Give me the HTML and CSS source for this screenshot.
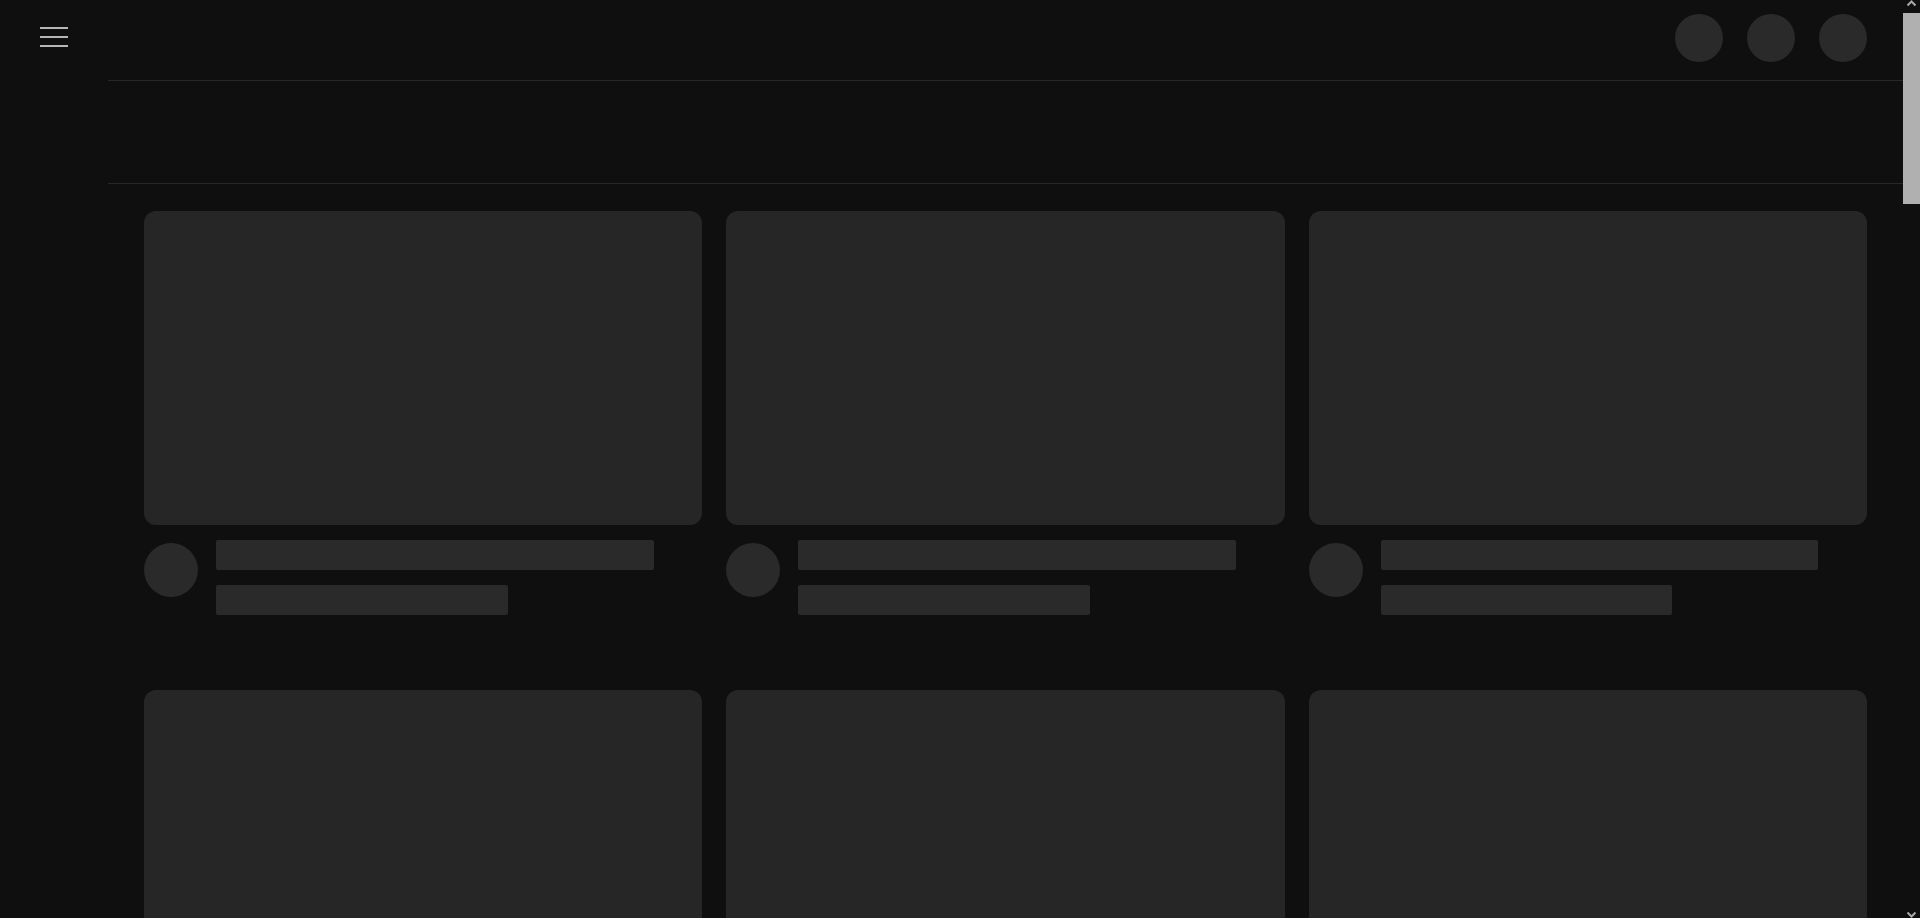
FILE: index.html
```html
<!DOCTYPE html>
<html lang="en">
<head>
<meta charset="utf-8">
<title>Loading</title>
<link rel="stylesheet" href="styles.css">
</head>
<body>
<div class="page">
  <aside class="guide">
    <button class="menu" aria-label="Menu">
      <svg width="28" height="20" viewBox="0 0 28 20">
        <line x1="0" y1="1" x2="28" y2="1" stroke="#fff" stroke-width="1.4"/>
        <line x1="0" y1="10" x2="28" y2="10" stroke="#fff" stroke-width="1.4"/>
        <line x1="0" y1="19" x2="28" y2="19" stroke="#fff" stroke-width="1.4"/>
      </svg>
    </button>
  </aside>
  <main class="main">
    <header class="masthead">
      <span class="dot"></span>
      <span class="dot"></span>
      <span class="dot"></span>
    </header>
    <div class="chips"></div>
    <section class="grid">
      <div class="card"><div class="thumb"></div><div class="meta"><span class="avatar"></span><div class="lines"><span class="bar bar-title"></span><span class="bar bar-sub"></span></div></div></div>
      <div class="card"><div class="thumb"></div><div class="meta"><span class="avatar"></span><div class="lines"><span class="bar bar-title"></span><span class="bar bar-sub"></span></div></div></div>
      <div class="card"><div class="thumb"></div><div class="meta"><span class="avatar"></span><div class="lines"><span class="bar bar-title"></span><span class="bar bar-sub"></span></div></div></div>
      <div class="card"><div class="thumb"></div><div class="meta"><span class="avatar"></span><div class="lines"><span class="bar bar-title"></span><span class="bar bar-sub"></span></div></div></div>
      <div class="card"><div class="thumb"></div><div class="meta"><span class="avatar"></span><div class="lines"><span class="bar bar-title"></span><span class="bar bar-sub"></span></div></div></div>
      <div class="card"><div class="thumb"></div><div class="meta"><span class="avatar"></span><div class="lines"><span class="bar bar-title"></span><span class="bar bar-sub"></span></div></div></div>
    </section>
  </main>
</div>
<div class="scrollbar">
  <svg class="arrow" width="17" height="13" viewBox="0 0 17 13"><polyline points="4.5,5.5 8.5,1.5 12.5,5.5" fill="none" stroke="#a8a8a8" stroke-width="2"/></svg>
  <div class="thumbbar"></div>
  <div class="track"></div>
  <svg class="arrow" width="17" height="13" viewBox="0 0 17 13"><polyline points="4.5,7.5 8.5,11.5 12.5,7.5" fill="none" stroke="#a8a8a8" stroke-width="2"/></svg>
</div>
</body>
</html>
```

FILE: styles.css
```css
html, body {
  margin: 0;
  padding: 0;
  height: 918px;
  overflow: hidden;
  background: #0f0f0f;
  font-family: Roboto, "Liberation Sans", Arial, sans-serif;
}

body {
  display: flex;
}

.page {
  flex: 1;
  display: flex;
  min-width: 0;
}

.guide {
  width: 108px;
  flex: none;
}

.menu {
  display: block;
  margin: 27px 0 0 40px;
  padding: 0;
  border: 0;
  background: none;
  width: 28px;
  height: 20px;
}

.menu svg {
  display: block;
}

.main {
  flex: 1;
  min-width: 0;
  display: flex;
  flex-direction: column;
}

.masthead {
  flex: none;
  box-sizing: border-box;
  height: 81px;
  border-bottom: 1px solid #272727;
  display: flex;
  justify-content: flex-end;
  align-items: flex-start;
  gap: 24px;
  padding: 14px 36px 0 0;
}

.dot {
  width: 48px;
  height: 48px;
  border-radius: 50%;
  background: #2a2a2a;
}

.chips {
  flex: none;
  height: 103px;
  box-sizing: border-box;
  border-bottom: 1px solid #272727;
}

.grid {
  flex: none;
  display: grid;
  grid-template-columns: repeat(3, 1fr);
  column-gap: 24px;
  row-gap: 75px;
  padding: 27px 36px 0 36px;
}

.thumb {
  aspect-ratio: 16 / 9;
  border-radius: 12px;
  background: #262626;
}

.meta {
  display: flex;
  margin-top: 15px;
}

.avatar {
  flex: none;
  width: 54px;
  height: 54px;
  border-radius: 50%;
  background: #2a2a2a;
  margin: 3px 18px 0 0;
}

.lines {
  flex: 1;
  display: flex;
  flex-direction: column;
  gap: 15px;
}

.bar {
  display: block;
  height: 30px;
  border-radius: 2px;
  background: #2a2a2a;
}

.bar-title {
  width: 90%;
}

.bar-sub {
  width: 60%;
}

.scrollbar {
  width: 17px;
  flex: none;
  height: 918px;
  display: flex;
  flex-direction: column;
  background: #0f0f0f;
}

.arrow {
  display: block;
  flex: none;
}

.thumbbar {
  height: 191px;
  background: #b0b0b0;
  flex: none;
}

.track {
  flex: 1;
}
```
